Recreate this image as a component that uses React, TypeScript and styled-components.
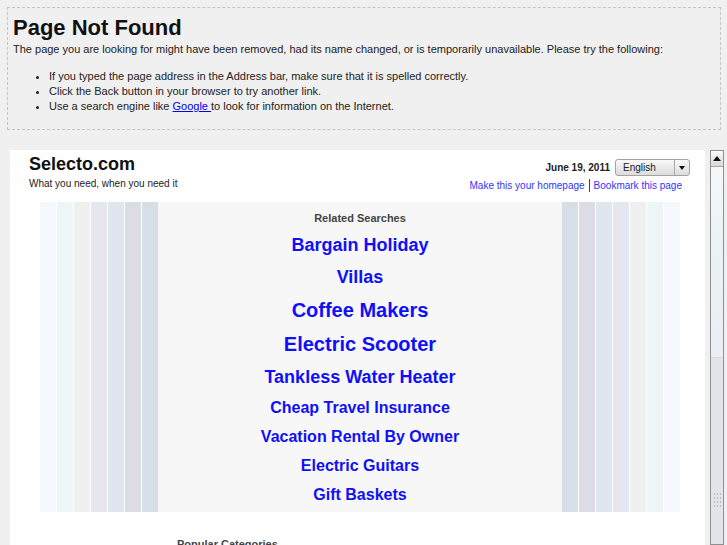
import React from 'react';
import styled, { createGlobalStyle } from 'styled-components';

const GlobalStyle = createGlobalStyle`
  html, body {
    margin: 0;
    padding: 0;
    background: #f0f0f0;
    overflow: hidden;
  }
  body {
    font-family: 'Liberation Sans', Arial, Helvetica, sans-serif;
    color: #222;
  }
`;

const Page = styled.div({
  display: 'flex',
  flexDirection: 'column',
  height: '100vh',
  padding: '7px 6px 0 7px',
  boxSizing: 'border-box'
});

const NotFoundBox = styled.div({
  border: '1px dashed #c4c4c4',
  padding: '7px 5px 5px',
  background: '#f0f0f0'
});

const Title = styled.h1({
  margin: 0,
  fontSize: '22px',
  lineHeight: '26px',
  fontWeight: 'bold',
  color: '#111'
});

const Intro = styled.p({
  margin: '1px 0 0',
  fontSize: '11px',
  lineHeight: '14px'
});

const Tips = styled.ul({
  margin: '13px 0 10px',
  paddingLeft: '36px',
  fontSize: '11px',
  lineHeight: '15px'
});

const PlainLink = styled.a({
  color: '#0000ee',
  textDecoration: 'underline'
});

const Frame = styled.div({
  flex: 1,
  display: 'flex',
  gap: '5px',
  margin: '20px -3px 0 3px',
  overflow: 'hidden'
});

const FrameBody = styled.div({
  flex: 1,
  background: '#fff',
  overflow: 'hidden'
});

const Header = styled.div({
  display: 'flex',
  justifyContent: 'space-between',
  padding: '4px 15px 0 19px'
});

const Brand = styled.div({
  display: 'flex',
  flexDirection: 'column'
});

const SiteName = styled.div({
  fontSize: '18px',
  lineHeight: '21px',
  fontWeight: 'bold',
  color: '#111'
});

const Tagline = styled.div({
  marginTop: '3px',
  fontSize: '10px',
  lineHeight: '12px',
  color: '#222'
});

const Tools = styled.div({
  display: 'flex',
  flexDirection: 'column',
  alignItems: 'flex-end'
});

const DateRow = styled.div({
  display: 'flex',
  alignItems: 'center',
  marginTop: '5px'
});

const DateText = styled.span({
  fontSize: '10px',
  fontWeight: 'bold',
  color: '#222',
  marginRight: '5px'
});

const LangSelect = styled.div({
  display: 'flex',
  width: '75px',
  height: '17px',
  boxSizing: 'border-box',
  border: '1px solid #a3a3a3',
  borderRadius: '3px',
  background: 'linear-gradient(#f9f9f9, #dcdcdc)',
  fontSize: '10px',
  color: '#222'
});

const LangLabel = styled.span({
  flex: 1,
  paddingLeft: '7px',
  lineHeight: '15px'
});

const LangArrow = styled.span({
  width: '14px',
  borderLeft: '1px solid #a8a8a8',
  display: 'flex',
  alignItems: 'center',
  justifyContent: 'center',
  '&::after': {
    content: '""',
    borderLeft: '3.5px solid transparent',
    borderRight: '3.5px solid transparent',
    borderTop: '4px solid #111'
  }
});

const ToolLinks = styled.div({
  display: 'flex',
  alignItems: 'center',
  marginTop: '3px',
  marginRight: '8px',
  fontSize: '10px',
  lineHeight: '12px'
});

const ToolLink = styled.a({
  color: '#3333ff',
  textDecoration: 'none'
});

const Divider = styled.span({
  width: '1px',
  height: '13px',
  background: '#444',
  margin: '0 4px'
});

const Results = styled.div({
  display: 'flex',
  width: '640px',
  height: '310px',
  margin: '10px 0 0 30px'
});

const StripeSet = styled.div({
  display: 'flex',
  gap: '1px',
  background: '#fff'
});

const Stripe = styled.div<{ $color: string }>`
  width: 16px;
  background: ${(p) => p.$color};
`;

const ResultList = styled.div({
  flex: 1,
  background: '#f7f7f7',
  display: 'flex',
  flexDirection: 'column',
  alignItems: 'center',
  paddingTop: '10px'
});

const ResultHeading = styled.div({
  fontSize: '11px',
  lineHeight: '13px',
  fontWeight: 'bold',
  color: '#444',
  marginBottom: '4px'
});

const lineFor: Record<number, number> = { 16: 29, 18: 32, 20: 34 };

const ResultLink = styled.a<{ $size: number }>`
  display: block;
  font-size: ${(p) => p.$size}px;
  line-height: ${(p) => lineFor[p.$size]}px;
  font-weight: bold;
  color: #1010f8;
  text-decoration: none;
`;

const Popular = styled.div({
  margin: '26px 0 0 167px',
  fontSize: '11px',
  lineHeight: '13px',
  fontWeight: 'bold',
  color: '#444'
});

const Scrollbar = styled.div({
  width: '14px',
  boxSizing: 'border-box',
  border: '1px solid #8f8f8f',
  display: 'flex',
  flexDirection: 'column',
  background: '#f1f3f7',
  overflow: 'hidden'
});

const ScrollButton = styled.div({
  flex: '0 0 15px',
  borderBottom: '1px solid #a5a5a5',
  background: 'linear-gradient(#fbfbfb, #d9d9d9)',
  display: 'flex',
  alignItems: 'center',
  justifyContent: 'center',
  '&::after': {
    content: '""',
    borderLeft: '4px solid transparent',
    borderRight: '4px solid transparent',
    borderBottom: '5px solid #111'
  }
});

const ScrollTrack = styled.div({
  flex: '0 0 190px',
  background: 'linear-gradient(#f7f8fa, #eaf3f5 40%, #ecedf5)'
});

const ScrollThumb = styled.div({
  flex: '0 0 284px',
  background: '#e4e5eb',
  borderTop: '1px solid #d8d9e0',
  display: 'flex',
  alignItems: 'center',
  justifyContent: 'center'
});

const Grip = styled.div({
  width: '9px',
  height: '16px',
  backgroundImage: 'radial-gradient(circle, #b8b8c4 0.8px, transparent 1px)',
  backgroundSize: '3px 4px'
});

const leftStripes = ['#f7f7ff', '#eef5f6', '#efefef', '#e6e6f0', '#dfe6ef', '#dcdce6', '#d6dee8'];

const searches = [
  { label: 'Bargain Holiday', size: 18 },
  { label: 'Villas', size: 18 },
  { label: 'Coffee Makers', size: 20 },
  { label: 'Electric Scooter', size: 20 },
  { label: 'Tankless Water Heater', size: 18 },
  { label: 'Cheap Travel Insurance', size: 16 },
  { label: 'Vacation Rental By Owner', size: 16 },
  { label: 'Electric Guitars', size: 16 },
  { label: 'Gift Baskets', size: 16 }
];

export default function App() {
  return (
    <>
      <GlobalStyle />
      <Page>
        <NotFoundBox>
          <Title>Page Not Found</Title>
          <Intro>
            The page you are looking for might have been removed, had its name changed, or is temporarily unavailable.
            Please try the following:
          </Intro>
          <Tips>
            <li>If you typed the page address in the Address bar, make sure that it is spelled correctly.</li>
            <li>Click the Back button in your browser to try another link.</li>
            <li>
              Use a search engine like <PlainLink href="#">Google </PlainLink> to look for information on the Internet.
            </li>
          </Tips>
        </NotFoundBox>
        <Frame>
          <FrameBody>
            <Header>
              <Brand>
                <SiteName>Selecto.com</SiteName>
                <Tagline>What you need, when you need it</Tagline>
              </Brand>
              <Tools>
                <DateRow>
                  <DateText>June 19, 2011</DateText>
                  <LangSelect>
                    <LangLabel>English</LangLabel>
                    <LangArrow />
                  </LangSelect>
                </DateRow>
                <ToolLinks>
                  <ToolLink href="#">Make this your homepage</ToolLink>
                  <Divider />
                  <ToolLink href="#">Bookmark this page</ToolLink>
                </ToolLinks>
              </Tools>
            </Header>
            <Results>
              <StripeSet>
                {leftStripes.map((c) => (
                  <Stripe key={'l' + c} $color={c} />
                ))}
              </StripeSet>
              <ResultList>
                <ResultHeading>Related Searches</ResultHeading>
                {searches.map((s) => (
                  <ResultLink key={s.label} href="#" $size={s.size}>
                    {s.label}
                  </ResultLink>
                ))}
              </ResultList>
              <StripeSet>
                {[...leftStripes].reverse().map((c) => (
                  <Stripe key={'r' + c} $color={c} />
                ))}
              </StripeSet>
            </Results>
            <Popular>Popular Categories</Popular>
          </FrameBody>
          <Scrollbar>
            <ScrollButton />
            <ScrollTrack />
            <ScrollThumb>
              <Grip />
            </ScrollThumb>
          </Scrollbar>
        </Frame>
      </Page>
    </>
  );
}
